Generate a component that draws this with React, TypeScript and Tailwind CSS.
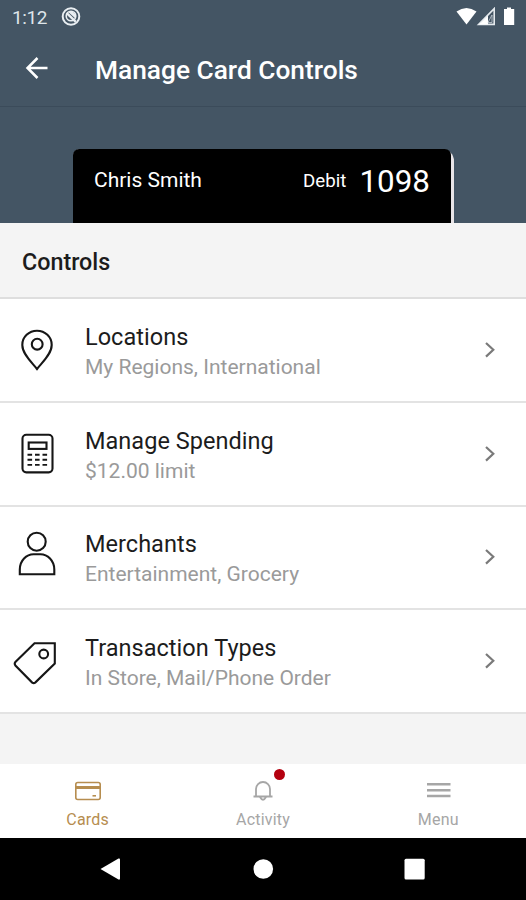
import type { ReactNode } from 'react'

interface Control {
  title: string
  detail: string
  icon: ReactNode
}

const controls: Control[] = [
  {
    title: 'Locations',
    detail: 'My Regions, International',
    icon: (
      <>
        <path d="M24 43C19.5 37 9.3 28.2 9.3 18.9a14.7 14.2 0 0 1 29.4 0C38.7 28.2 28.5 37 24 43Z" />
        <circle cx="24.2" cy="18.2" r="5.4" />
      </>
    ),
  },
  {
    title: 'Manage Spending',
    detail: '$12.00 limit',
    icon: (
      <>
        <rect x="9.5" y="4.8" width="30" height="37.6" rx="3.8" />
        <rect x="15.7" y="12.5" width="17.8" height="6.4" />
        <path strokeWidth="1.9" d="M14.5 24.7h4.6M22 24.7h4.6M29.5 24.7h4.6M14.5 29.8h4.6M22 29.8h4.6M29.5 29.8h4.6M14.5 34.9h4.6M22 34.9h4.6M29.5 34.9h4.6" />
      </>
    ),
  },
  {
    title: 'Merchants',
    detail: 'Entertainment, Grocery',
    icon: (
      <>
        <circle cx="23.7" cy="8.7" r="9" />
        <path d="M6.8 41.2V36.5C6.8 27.5 13.5 21.2 20.5 21.2h7c7 0 13.8 6.3 13.8 15.3v4.7Z" />
      </>
    ),
  },
  {
    title: 'Transaction Types',
    detail: 'In Store, Mail/Phone Order',
    icon: (
      <>
        <path d="M21.5 6.3H41.8V26.5L22.2 45.6Q20.7 46.7 19.2 45.6L2.4 28.5Q1 26.7 2.4 25Z" />
        <circle cx="30.7" cy="17" r="4.4" />
      </>
    ),
  },
]

function StatusBar() {
  return (
    <div className="flex h-[34px] items-center pl-3 pr-2 text-white">
      <span className="text-[19px] leading-none tracking-[-0.4px] text-[#dfe5ea]">1:12</span>
      <svg className="ml-[14px] size-5" viewBox="0 0 20 20" fill="none" stroke="#e9eef2">
        <circle cx="10" cy="9.5" r="8.3" strokeWidth="2" />
        <circle cx="10" cy="9" r="4.8" strokeWidth="1.6" />
        <path d="M5.8 6.2 14.8 14.8" strokeWidth="2.4" />
        <path d="M7.5 5.2a4.8 4.8 0 0 1 6.7 6.1Z" fill="#e9eef2" stroke="none" />
      </svg>
      <svg className="ml-auto h-5 w-[62px]" viewBox="0 0 62 20" fill="#fff">
        <path d="M.5 4.6Q10.5-2.6 20.5 4.6L10.5 17.5Z" />
        <path d="M38.2 1.6V17.4H22.6Z" fill="none" stroke="#e4e9ed" strokeWidth="1.6" />
        <path d="M32 8.5v9h-9Z" />
        <path d="M36 8v7.5h-4Z" fill="#445564" stroke="#c5cdd4" strokeWidth=".8" />
        <path d="M51 .5h4V2h3.2v16H48V2h3Z" />
      </svg>
    </div>
  )
}

function CardPreview() {
  return (
    <div className="flex h-[116px] items-end pl-[73px]">
      <div className="h-[74.5px] w-[381px] rounded-tl-[7px] rounded-tr-[12px] bg-[#e9e5e8] pr-[3px]">
        <div className="flex h-full items-start rounded-t-[6px] bg-black px-[21px] text-white">
          <span className="mt-[19.5px] text-[21px] leading-6">Chris Smith</span>
          <span className="ml-auto mt-5 text-[18.7px] leading-6">Debit</span>
          <span className="ml-[13px] mt-[15.5px] text-[31.4px] leading-9">1098</span>
        </div>
      </div>
    </div>
  )
}

function ControlRow({ title, detail, icon }: Control) {
  return (
    <div className="flex h-[103.75px] items-center border-b-2 border-[#e3e3e3] bg-white pl-[13px] pr-[30px]">
      <svg
        className="size-12 shrink-0 overflow-visible"
        viewBox="0 0 48 48"
        fill="none"
        stroke="#161616"
        strokeWidth="2.1"
      >
        {icon}
      </svg>
      <div className="ml-6 flex-1 whitespace-nowrap pt-1">
        <div className="text-[23.5px] leading-[30px] tracking-[0.03px] text-[#1c1c1c]">{title}</div>
        <div className="text-[21px] leading-[30px] text-[#9a9a9a]">{detail}</div>
      </div>
      <svg className="h-4 w-3" viewBox="0 0 12 16" fill="none" stroke="#7a7a7a" strokeWidth="2.2">
        <path d="m2 1 7.3 6.8L2 14.6" />
      </svg>
    </div>
  )
}

function TabBar() {
  return (
    <div className="flex h-[74px] bg-white text-[16px] leading-5 tracking-[0.2px] text-[#a6a6a6]">
      <div className="flex flex-1 flex-col items-center pt-[14px] text-[#b68d4f]">
        <svg className="h-6 w-7" viewBox="0 0 28 24" fill="none" stroke="currentColor" strokeWidth="1.6">
          <rect x="1.8" y="4.5" width="24.4" height="17" rx="2" />
          <path d="M2 9.5h24" strokeWidth="3" />
          <path d="M18.5 17.8H22" />
        </svg>
        <span className="mt-2">Cards</span>
      </div>
      <div className="flex flex-1 flex-col items-center pt-[14px]">
        <div className="relative">
          <svg className="h-6 w-7" viewBox="0 0 28 24" fill="none" stroke="currentColor" strokeWidth="1.8">
            <path d="M4.5 18.5h19M7 18.5V11a7 7 0 0 1 14 0v7.5M11 19q3 5.5 6 0" />
          </svg>
          <span className="absolute -right-2 -top-[9px] size-[11px] rounded-full bg-[#b4000f]" />
        </div>
        <span className="mt-2">Activity</span>
      </div>
      <div className="flex flex-1 flex-col items-center pt-[14px]">
        <svg className="h-6 w-7" viewBox="0 0 28 24" stroke="currentColor" strokeWidth="2.4">
          <path d="M3 6.3h23.5M3 12.2h23.5M3 18h23.5" />
        </svg>
        <span className="mt-2">Menu</span>
      </div>
    </div>
  )
}

function SystemNav() {
  return (
    <div className="flex h-[62px] items-center justify-center bg-black">
      <svg className="h-6 w-[330px]" viewBox="0 0 330 24" fill="#fff">
        <path d="M2.500 12 20.500 1.500q1.500-.5 1.500 1v19q0 1.500-1.500 1Z" />
        <circle cx="165.3" cy="12" r="9.8" />
        <rect x="306.500" y="1.7" width="20.200" height="20.700" rx="1.5" />
      </svg>
    </div>
  )
}

export default function App() {
  return (
    <div className="flex h-[900px] w-[526px] flex-col overflow-hidden bg-[#f4f4f4] font-['Roboto',sans-serif]">
      <header className="bg-[#445564]">
        <StatusBar />
        <div className="flex h-[73px] items-center border-b border-[#3b4b5a] pl-[25px] text-white">
          <svg className="mb-1 size-6" viewBox="0 0 24 24" fill="none" stroke="currentColor" strokeWidth="2.5">
            <path d="M22.500 12H2.500M12.500 2 2.500 12l10 10" />
          </svg>
          <h1 className="ml-[46px] text-[26.3px] font-medium leading-8">Manage Card Controls</h1>
        </div>
        <CardPreview />
      </header>

      <h2 className="flex h-[76px] items-center border-b-2 border-[#dedede] pl-[22px] pt-[3px] text-[23.3px] font-medium leading-7 text-[#1c1c1c]">
        Controls
      </h2>
      {controls.map(c => (
        <ControlRow key={c.title} {...c} />
      ))}

      <div className="mt-auto">
        <TabBar />
        <SystemNav />
      </div>
    </div>
  )
}
